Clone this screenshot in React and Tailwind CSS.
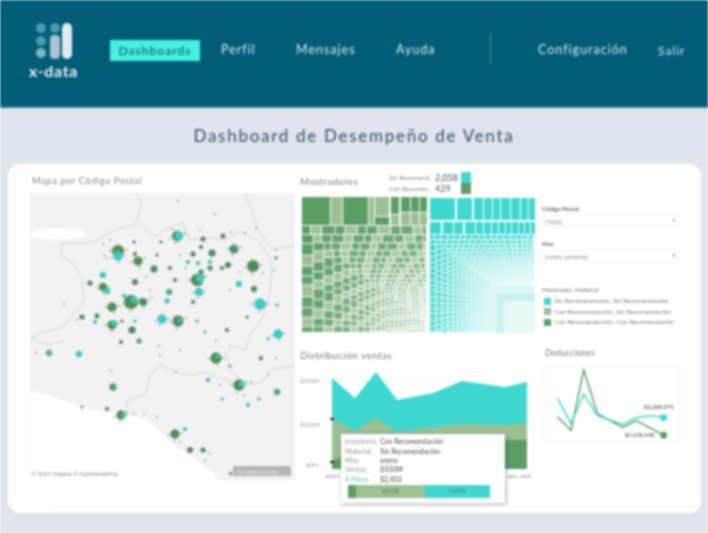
import React from 'react';

const GREEN = '#5b9e63';
const LIGHT = '#9cbf94';
const TEAL = '#3fd8d0';

const navItems = [
  { name: 'Perfil', className: 'ml-[21px] w-[75px]' },
  { name: 'Mensajes', className: 'w-[100px]' },
  { name: 'Ayuda', className: 'w-[94px]' },
];

// x, y, r, green radius first then the teal overlap
const bubbles = [
  [177, 236, 5, 'g'], [179, 236, 4, 't'], [118, 251, 6, 'g'], [118, 256, 4.5, 't'], [138, 261, 4.5, 'g'],
  [212, 253, 3.5, 'g'], [234, 249, 4.5, 'g'], [236, 247, 1.5, 't'], [253, 266, 6, 'g'], [154, 269, 3.5, 'g'],
  [103, 275, 3, 't'], [90, 283, 2.5, 'g'], [103, 287, 4, 'g'], [107, 291, 3, 't'], [135, 282, 3, 'g'],
  [197, 280, 6, 'g'], [200, 278, 4, 't'], [199, 292, 4, 't'], [239, 284, 3, 't'], [254, 289, 3, 'g'],
  [260, 304, 5.5, 't'], [131, 302, 7, 'g'], [134, 300, 3, 't'], [143, 302, 4, 'g'], [112, 307, 4.5, 'g'],
  [169, 292, 3, 'g'], [168, 292, 2, 't'], [167, 301, 2.5, 't'], [162, 319, 4.5, 't'], [178, 321, 5.5, 'g'],
  [180, 320, 2, 't'], [112, 325, 4.5, 'g'], [114, 323, 3, 't'], [132, 330, 3.5, 'g'], [82, 317, 2.5, 'g'],
  [97, 316, 2.5, 'g'], [95, 322, 2, 't'], [278, 334, 4.5, 't'], [193, 254, 2.5, 'g'], [203, 239, 2.5, 'g'],
  [201, 247, 2, 'g'], [223, 236, 2.5, 'g'], [228, 265, 3, 'g'], [201, 272, 2.5, 'g'], [170, 268, 2, 'g'],
  [175, 280, 2, 'g'], [188, 262, 2, 't'], [198, 263, 2, 't'], [210, 262, 2, 't'], [210, 268, 2.5, 'g'],
  [222, 268, 2, 'g'], [157, 255, 1.5, 'g'], [135, 254, 2, 'g'], [134, 242, 1.5, 'g'], [161, 242, 1.5, 'g'],
  [193, 302, 2, 'g'], [124, 296, 2, 't'], [135, 321, 1.5, 't'], [197, 321, 1.5, 't'], [205, 332, 1.5, 't'],
  [227, 330, 2, 'g'], [247, 317, 1.5, 'g'], [277, 305, 1.5, 't'], [276, 258, 1.5, 'g'], [122, 321, 1.5, 'g'],
  [216, 358, 5.5, 'g'], [218, 356, 2, 't'], [239, 385, 5.5, 'g'], [242, 384, 3, 't'], [277, 392, 3, 'g'],
  [277, 392, 1.5, 't'], [113, 387, 3.5, 'g'], [114, 387, 1.5, 't'], [121, 415, 4.5, 'g'], [124, 415, 2.5, 't'],
  [175, 434, 4.5, 'g'], [190, 450, 3, 'g'], [203, 450, 2.5, 'g'], [185, 429, 2, 't'], [49, 353, 3, 'g'],
  [49, 353, 2, 't'], [79, 354, 3, 't'], [121, 342, 2, 'g'], [139, 341, 2.5, 'g'], [139, 340, 1.5, 't'],
  [208, 380, 2, 't'], [222, 399, 1.5, 't'], [248, 405, 2, 't'], [259, 399, 1.5, 't'], [82, 407, 1.5, 't'],
  [107, 409, 2, 'g'], [230, 366, 1.5, 't'], [261, 358, 2, 'g'], [268, 339, 1.5, 't'],
];

const specks = [
  [178, 201], [215, 214], [172, 229], [103, 244], [110, 240], [104, 255], [106, 258], [231, 232], [245, 233],
  [256, 228], [276, 250], [274, 270], [263, 273], [240, 272], [230, 290], [150, 290], [152, 297], [175, 240],
  [200, 230], [180, 255], [186, 268], [146, 277], [64, 304], [77, 320], [180, 350], [159, 346], [260, 360],
  [276, 358], [268, 375], [251, 382], [176, 372], [160, 355], [216, 341], [111, 371], [36, 353], [134, 413],
  [144, 414], [157, 417], [172, 436], [180, 442], [205, 461], [209, 453], [220, 385], [244, 395],
];

// small points that sit around the bigger bubbles
const halo = bubbles
  .filter(([, , r]) => r >= 4)
  .flatMap(([x, y, r], i) => [
    [x + r + 2, y - 3 + (i % 4)],
    [x - r - 2, y + 2 - (i % 3)],
    [x + (i % 5) - 2, y + r + 2],
  ]);

const gridBorders = [
  '136,193 142,203 135,225 118,228 92,243 62,243 61,255 75,265 82,280 84,300 65,325 55,330 42,333 30,338',
  '142,224 155,236 170,228 183,222 190,240 215,238 225,240 240,232 258,240 272,262 270,290 262,320 250,335 245,350',
  '245,193 252,210 258,230 272,250 295,245',
  '245,350 230,345 226,358 232,372 245,385 262,382 270,370 295,365',
  '125,415 127,400 145,395 150,375 160,365 175,372 190,375 205,372 220,378 240,385',
  '30,338 50,345 65,340',
];

function buildTreemap(x0, y0, w, h, startThick, dark, light, fadeTo, shrink, minThick) {
  const cells = [];
  let x = x0;
  let y = y0;
  const right = x0 + w;
  const bottom = y0 + h;
  let t = startThick;
  let i = 0;
  while (right - x > 3 && bottom - y > 3) {
    const fade = Math.min(1, i / fadeTo);
    let cx = x;
    let n = 0;
    while (cx < right) {
      const cw = Math.min(t * (1 + ((n * 7) % 5) * 0.12), right - cx);
      cells.push({ x: cx, y, w: cw, h: t, fill: (n + i) % 3 === 1 ? light : dark, o: 1 - fade * 0.85 - n / 80 });
      cx += cw;
      n += 1;
    }
    let cy = y + t;
    n = 0;
    while (cy < bottom) {
      const ch = Math.min(t * (1 + ((n * 3) % 4) * 0.1), bottom - cy);
      cells.push({ x, y: cy, w: t * 1.3, h: ch, fill: (n + i) % 3 === 2 ? light : dark, o: 1 - fade * 0.8 - n / 100 });
      cy += ch;
      n += 1;
    }
    x += t * 1.3;
    y += t;
    t = Math.max(minThick, t * shrink);
    i += 1;
  }
  return cells;
}

const greenTop = [
  [302, 196, 28, 28, GREEN], [331, 196, 11, 28, LIGHT], [343, 196, 25, 28, GREEN], [369, 196, 5, 28, LIGHT],
  [375, 196, 14, 19, LIGHT], [375, 216, 14, 8, GREEN], [391, 196, 8, 17, GREEN], [391, 214, 8, 10, LIGHT],
  [401, 196, 9, 15, GREEN], [401, 212, 9, 12, LIGHT], [411, 196, 8, 15, GREEN], [411, 212, 8, 12, LIGHT],
  [420, 196, 7, 15, GREEN], [420, 212, 7, 12, LIGHT],
];

const tealTop = [
  [430, 197, 25, 22], [457, 197, 15, 22], [474, 197, 9, 22], [484, 197, 8, 22], [493, 197, 7, 22],
  [501, 197, 9, 22], [511, 197, 9, 22], [521, 197, 7, 22], [529, 197, 6, 22],
  [430, 221, 11, 12], [443, 221, 10, 12], [454, 221, 9, 12], [465, 221, 10, 12], [476, 221, 7, 12],
  [484, 221, 7, 12], [492, 221, 6, 12], [499, 221, 6, 12], [506, 221, 5, 12], [512, 221, 6, 12],
  [519, 221, 5, 12], [525, 221, 5, 12], [531, 221, 4, 12],
];

const greenCells = buildTreemap(302, 225, 125, 107, 9, GREEN, LIGHT, 24, 0.91, 3.4);
const tealCells = buildTreemap(430, 234, 105, 98, 5, TEAL, TEAL, 17, 0.93, 3);

function Treemap() {
  return (
    <svg viewBox="300 195 237 139" className="block w-[237px] h-[139px]">
      {greenCells.map((c, i) => (
        <rect key={i} x={c.x} y={c.y} width={Math.max(c.w - 1, 0.5)} height={Math.max(c.h - 1, 0.5)} fill={c.fill} opacity={Math.max(c.o, 0.1)} />
      ))}
      {greenTop.map(([x, y, w, h, f], i) => (
        <rect key={i} x={x} y={y} width={w} height={h} fill={f} />
      ))}
      {tealCells.map((c, i) => (
        <rect key={i} x={c.x} y={c.y} width={Math.max(c.w - 1, 0.5)} height={Math.max(c.h - 1, 0.5)} fill={c.fill} opacity={Math.max(c.o, 0.14)} />
      ))}
      {tealTop.map(([x, y, w, h], i) => (
        <rect key={i} x={x} y={y} width={w} height={h} fill={TEAL} />
      ))}
      <rect x="490" y="284" width="45" height="48" fill="#def7f4" />
      <rect x="497" y="292" width="38" height="40" fill="#c9f1ed" />
      <rect x="504" y="300" width="31" height="32" fill="#e6f9f7" />
    </svg>
  );
}

function MapChart() {
  return (
    <svg viewBox="30 193 265 287" className="block w-[265px] h-[287px] bg-[#f2f2f2]">
      <ellipse cx="58" cy="234" rx="28" ry="6" fill="#ffffff" />
      <polygon points="31,391 57,398 80,407 107,412 120,415 143,418 157,428 167,438 177,448 190,455 207,468 217,477 219,480 31,480" fill="#ffffff" />
      {gridBorders.map((p) => (
        <polyline key={p} points={p} fill="none" stroke="#d0d0d0" strokeWidth="0.9" />
      ))}
      {specks.concat(halo).map(([x, y], i) => (
        <circle key={i} cx={x} cy={y} r="1" fill="#9aa39c" />
      ))}
      {bubbles.map(([x, y, r, k], i) => (
        <circle key={i} cx={x} cy={y} r={r} fill={k === 'g' ? '#4f9058' : '#33cfc9'} stroke="#7f9a88" strokeWidth="0.3" />
      ))}
      <rect x="233" y="466" width="58" height="10" rx="1" fill="#b5b5b5" />
      <rect x="229" y="472" width="3" height="3" fill="#8d8d8d" />
      <text x="237" y="473.5" fontSize="6" fill="#f4f4f4" fontFamily="Lato, sans-serif">Ad desconocida</text>
      <text x="32" y="476" fontSize="5.5" fill="#8a8a8a" fontFamily="Lato, sans-serif">© 2021 Mapbox © OpenStreetMap</text>
    </svg>
  );
}

function AreaChart() {
  return (
    <svg viewBox="300 368 237 112" className="block w-[237px] h-[112px]">
      <g stroke="#efefef" strokeWidth="0.7">
        <line x1="324" y1="380" x2="530" y2="380" />
        <line x1="324" y1="424" x2="530" y2="424" />
        <line x1="324" y1="463" x2="530" y2="463" />
      </g>
      <polygon points="332,377 355,397 376,371 397,399 433,392 462,380 505,386 527,381 527,468 332,468" fill={TEAL} />
      <polygon points="332,418 355,430 376,417 397,431 433,426 462,423 505,424 527,422 527,468 332,468" fill={LIGHT} />
      <polygon points="332,460 355,450 376,445 397,443 433,441 462,439 505,439 527,439 527,468 332,468" fill={GREEN} />
      <rect x="330" y="417" width="4" height="2" fill="#222" />
      <rect x="330" y="460" width="4" height="2" fill="#222" />
      <g fontSize="6" fill="#9a9a9a" fontFamily="Lato, sans-serif">
        <text x="300" y="382">$200M</text>
        <text x="300" y="426">$100M</text>
        <text x="306" y="466">$0M</text>
        <text x="325" y="477">enero</text>
        <text x="507" y="477">ago..</text>
        <text x="520" y="477">sept..</text>
      </g>
    </svg>
  );
}

function LineChart() {
  return (
    <svg viewBox="543 364 137 77" className="block w-[137px] h-[77px] border border-[#f4f4f4]">
      <polyline points="556,416 570,430 583,368 597,413 623,427 637,420 665,435" fill="none" stroke={GREEN} strokeWidth="1.5" />
      <polyline points="556,397 570,423 583,393 597,415 623,424 637,417 652,415 665,417" fill="none" stroke={TEAL} strokeWidth="1.6" />
      <circle cx="665" cy="417" r="3.5" fill={TEAL} />
      <circle cx="665" cy="435" r="3.5" fill={GREEN} />
      <g fontSize="6" fontWeight="700" fill="#6b6b6b" fontFamily="Lato, sans-serif">
        <text x="645" y="408">$2,200,371</text>
        <text x="625" y="437">$1,618,448</text>
      </g>
    </svg>
  );
}

const tooltipRows = [
  ['Inventario:', 'Con Recomendación'],
  ['Material:', 'Sin Recomendación'],
  ['Mes:', 'enero'],
  ['Ventas:', '$100M'],
  ['# Mstrs:', '$2,403'],
];

function Tooltip() {
  return (
    <div className="absolute left-[41px] top-[65px] w-[164px] h-[69px] bg-white shadow-[1px_1px_4px_rgba(0,0,0,0.35)] pl-1 pr-1 pt-[3px]">
      {tooltipRows.map(([label, value], i) => (
        <div key={label} className="flex h-[9.4px] items-center text-[7px] leading-none">
          <span className={`w-[35px] ${i === 4 ? 'text-[#6fc4b4]' : 'text-[#9a9a9a]'}`}>{label}</span>
          <span className="text-[#4a4a4a]">{value}</span>
        </div>
      ))}
      <div className="flex h-[13px] w-[142px] ml-[3px] mt-[1px] text-[5px] text-[#4d6b55]">
        <div className="w-[8px] bg-[#5b9e63]" />
        <div className="w-[69px] bg-[#9cbf94] flex items-center justify-center">60.71%</div>
        <div className="w-[65px] bg-[#3fd8d0] flex items-center justify-center">33.89%</div>
      </div>
    </div>
  );
}

const legendItems = [
  { color: 'bg-[#3fd8d0]', label: 'Sin Recomendación, Sin Recomendación' },
  { color: 'bg-[#9cbf94]', label: 'Con Recomendación, Sin Recomendación' },
  { color: 'bg-[#5b9e63]', label: 'Con Recomendación, Con Recomendación' },
];

function Filter({ label, value }) {
  return (
    <div>
      <div className="text-[6px] font-bold leading-[8px] text-[#666] pl-px">{label}</div>
      <div className="mt-[2px] h-[12px] flex items-center justify-between px-[3px] border border-[#f2f2f2] rounded-sm text-[6px] text-[#888]">
        <span>{value}</span>
        <span className="text-[4px] text-[#555]">▼</span>
      </div>
    </div>
  );
}

export default function App() {
  return (
    <div className="w-[708px] h-[533px] overflow-hidden bg-[#e0e5ed] blur-[0.8px] font-['Lato',sans-serif]">
      <header className="h-[108px] bg-[#005d78] border-b-2 border-[#2f7a90] flex items-center text-[#dbe9ec] text-[12.5px] tracking-[0.08em]">
        <div className="w-[110px] pl-[29px] pb-[6px] flex flex-col">
          <svg viewBox="0 0 44 38" className="w-[44px] h-[38px] ml-[6px]">
            <g fill="#4b9bab">
              <circle cx="6" cy="6" r="5" />
              <circle cx="20" cy="6" r="5" />
              <circle cx="6" cy="31" r="5" fill="#7fb3bf" />
              <circle cx="6" cy="19" r="5" />
            </g>
            <rect x="15" y="13" width="10" height="24" rx="4" fill="#a9c4cd" />
            <rect x="27" y="1" width="10" height="36" rx="5" fill="#e2ecef" />
          </svg>
          <span className="text-[16px] font-bold leading-[16px] mt-[3px] tracking-[0.04em] text-[#e8f0f2]">x-data</span>
        </div>
        <div className="w-[90px] h-[21px] bg-[#45f0e0] text-[#0f6a80] flex items-center justify-center text-[12px] font-semibold mb-[5px]">Dashboards</div>
        {navItems.map((item) => (
          <span key={item.name} className={`mb-[6px] ${item.className}`}>{item.name}</span>
        ))}
        <div className="w-px h-[32px] bg-[#3f8ba0] mb-[8px]" />
        <span className="ml-[47px] w-[120px] mb-[6px]">Configuración</span>
        <span className="mb-[5px] text-[12px]">Salir</span>
      </header>

      <h1 className="h-[56px] flex items-center justify-center pb-[1px] text-[17px] font-medium tracking-[0.1em] text-[#3e5b74]">
        Dashboard de Desempeño de Venta
      </h1>

      <main className="ml-2 w-[693px] h-[349px] bg-white rounded-xl pl-[22px] pt-[10px] relative">
        <div className="flex">
          <section className="w-[265px]">
            <h2 className="h-[19px] pl-[2px] text-[9.5px] tracking-[0.05em] text-[#8a8a8a] leading-[14px]">Mapa por Código Postal</h2>
            <MapChart />
          </section>

          <section className="w-[237px] ml-[5px]">
            <div className="flex h-[24px] -mt-[2px]">
              <h2 className="w-[89px] pt-[3px] text-[9.5px] tracking-[0.05em] text-[#7c7c7c] leading-[14px]">Mostradores</h2>
              <div className="w-[72px] text-[6.5px] text-[#888] leading-[10.5px] pt-px">
                <div className="flex items-center"><span className="w-[46px]">Sin Recomend..</span><span className="text-[9px] text-[#555]">2,058</span></div>
                <div className="flex items-center"><span className="w-[46px]">Con Recomen..</span><span className="text-[9px] text-[#555]">429</span></div>
              </div>
              <div className="w-[10px]">
                <div className="h-[11px] bg-[#3fd8d0]" />
                <div className="h-[11px] bg-[#5b9e63]" />
              </div>
            </div>
            <Treemap />
            <h2 className="mt-[13px] h-[21px] text-[10px] tracking-[0.04em] text-[#7c7c7c] leading-[14px]">Distribución ventas</h2>
            <div className="relative">
              <AreaChart />
              <Tooltip />
            </div>
          </section>

          <section className="w-[139px] ml-[4px]">
            <div className="pt-[31px] flex flex-col gap-[13px]">
              <Filter label="Código Postal" value="(7000)" />
              <Filter label="Mes" value="(varios números)" />
            </div>
            <div className="mt-[24px] text-[6.5px] text-[#7d7d7d]">
              <div className="leading-[8px] pl-px text-[#777] mb-[2px]">Mostrador, Material</div>
              {legendItems.map((item) => (
                <div key={item.label} className="flex items-center h-[10.5px] pl-[3px]">
                  <div className={`w-[7px] h-[7px] mr-[3px] ${item.color}`} />
                  <span>{item.label}</span>
                </div>
              ))}
            </div>
            <h2 className="mt-[19px] pl-[4px] h-[18px] text-[8.5px] tracking-[0.02em] text-[#7c7c7c] leading-[12px]">Deducciones</h2>
            <div className="pl-[2px]">
              <LineChart />
            </div>
          </section>
        </div>
        <div className="absolute left-[44px] right-0 bottom-[6px] h-px bg-[#eef0f2]" />
      </main>
    </div>
  );
}
